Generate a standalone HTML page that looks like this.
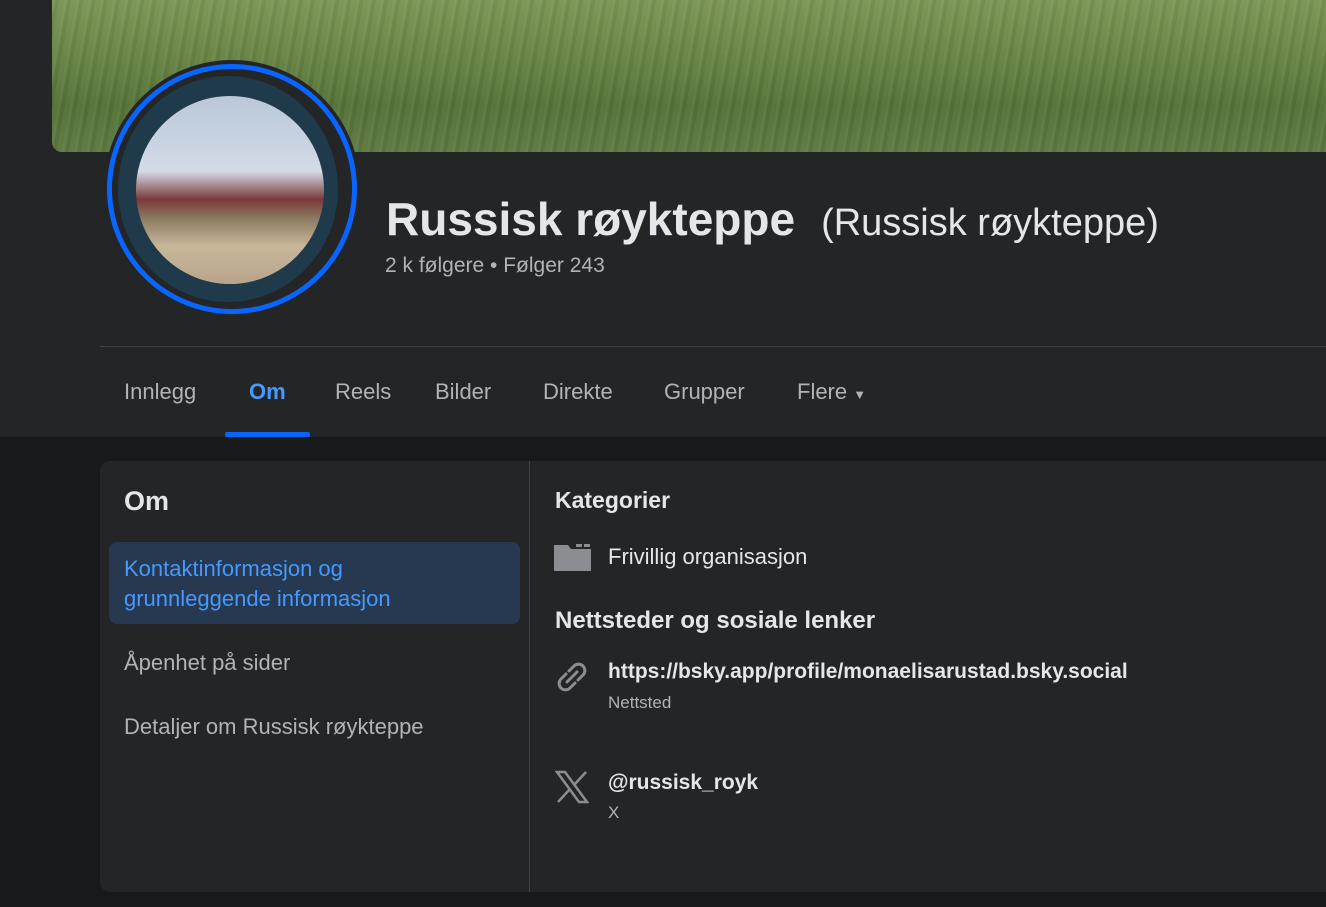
<!DOCTYPE html>
<html><head><meta charset="utf-8"><style>
*{margin:0;padding:0;box-sizing:border-box}
body{width:1326px;height:907px;overflow:hidden;background:#18191a;font-family:"Liberation Sans",sans-serif;position:relative}
.hdr{position:absolute;left:0;top:0;width:1326px;height:437px;background:#242526}
.cover{position:absolute;left:52px;top:0;width:1274px;height:152px;border-bottom-left-radius:10px;
background:linear-gradient(180deg,#7c9656 0%,#6a8546 35%,#557238 70%,#5e7a42 100%);overflow:hidden}
.cover:after{content:"";position:absolute;inset:0;background:repeating-linear-gradient(100deg,rgba(255,255,255,.05) 0 3px,rgba(0,0,0,.05) 3px 7px,rgba(255,255,255,.02) 7px 12px)}
.av{position:absolute;left:104px;top:60px;width:256px;height:256px;border-radius:50%;background:#242526}
.ring{position:absolute;left:107px;top:64px;width:250px;height:250px;border-radius:50%;border:5px solid #0866ff}
.pic{position:absolute;left:118px;top:76px;width:220px;height:226px;border-radius:50%;background:#1f3a4a;overflow:hidden}
.pic .in{position:absolute;left:18px;top:20px;width:188px;height:188px;border-radius:50%;background:linear-gradient(180deg,#b9c8da 0%,#d3dbe6 40%,#7a3a3a 55%,#8a7a60 65%,#c9b79a 80%,#b8a48a 100%)}
h1{position:absolute;left:386px;top:192px;font-size:46px;font-weight:bold;color:#e4e6eb;white-space:nowrap}
h1 span{font-weight:normal;font-size:38px;margin-left:26px}
.fol{position:absolute;left:385px;top:254px;font-size:21px;color:#b0b3b8}
.line{position:absolute;left:100px;top:346px;width:1226px;height:1px;background:#3e4042}
.tab{position:absolute;top:379px;font-size:22px;color:#b0b3b8}
.ul{position:absolute;left:225px;top:432px;width:85px;height:5px;background:#0866ff;border-radius:2px}
.card{position:absolute;left:100px;top:461px;width:1240px;height:431px;background:#242526;border-radius:10px}
.div{position:absolute;left:529px;top:461px;width:1px;height:431px;background:#3e4042}
.t{position:absolute;white-space:nowrap}
</style></head><body>
<div class="hdr"></div>
<div class="cover"></div>
<div class="av"></div>
<div class="pic"><div class="in"></div></div>
<div class="ring"></div>
<h1>Russisk røykteppe<span>(Russisk røykteppe)</span></h1>
<div class="fol">2 k følgere • Følger 243</div>
<div class="line"></div>
<div class="tab" style="left:124px">Innlegg</div>
<div class="tab" style="left:249px;color:#4599ff;font-weight:bold">Om</div>
<div class="tab" style="left:335px">Reels</div>
<div class="tab" style="left:435px">Bilder</div>
<div class="tab" style="left:543px">Direkte</div>
<div class="tab" style="left:664px">Grupper</div>
<div class="tab" style="left:797px">Flere <span style="font-size:13px">▼</span></div>
<div class="ul"></div>
<div class="card"></div>
<div class="div"></div>
<div class="t" style="left:124px;top:486px;font-size:27px;font-weight:bold;color:#e4e6eb">Om</div>
<div style="position:absolute;left:109px;top:542px;width:411px;height:82px;background:#263951;border-radius:8px"></div>
<div class="t" style="left:124px;top:554px;font-size:22px;line-height:30px;color:#4599ff">Kontaktinformasjon og<br>grunnleggende informasjon</div>
<div class="t" style="left:124px;top:650px;font-size:22px;color:#b0b3b8">Åpenhet på sider</div>
<div class="t" style="left:124px;top:714px;font-size:22px;color:#b0b3b8">Detaljer om Russisk røykteppe</div>
<div class="t" style="left:555px;top:487px;font-size:23px;font-weight:bold;color:#e4e6eb">Kategorier</div>
<svg style="position:absolute;left:554px;top:543px" width="37" height="28"><path d="M0 2h14l3 4h20v22H0z" fill="#8a8d91"/><rect x="22" y="1" width="6" height="3" fill="#8a8d91"/><rect x="30" y="1" width="6" height="3" fill="#8a8d91"/></svg>
<div class="t" style="left:608px;top:544px;font-size:22px;color:#e4e6eb">Frivillig organisasjon</div>
<div class="t" style="left:555px;top:607px;font-size:24px;font-weight:bold;color:#e4e6eb">Nettsteder og sosiale lenker</div>
<svg style="position:absolute;left:554px;top:659px" width="36" height="36" fill="none" stroke="#8a8d91" stroke-width="3" stroke-linecap="round"><path d="M15 12l5-5a6 6 0 0 1 9 9l-5 5M21 24l-5 5a6 6 0 0 1-9-9l5-5M13 23l10-10"/></svg>
<div class="t" style="left:608px;top:660px;font-size:21px;font-weight:bold;color:#e4e6eb">https://bsky.app/profile/monaelisarustad.bsky.social</div>
<div class="t" style="left:608px;top:693px;font-size:17px;color:#b0b3b8">Nettsted</div>
<svg style="position:absolute;left:555px;top:770px" width="34" height="34" fill="none" stroke="#8a8d91" stroke-width="2.5"><path d="M2 2h8l22 30h-8zM31 2L19 15M3 32l12-13"/></svg>
<div class="t" style="left:608px;top:771px;font-size:21px;font-weight:bold;color:#e4e6eb">@russisk_royk</div>
<div class="t" style="left:608px;top:803px;font-size:17px;color:#b0b3b8">X</div>
</body></html>
